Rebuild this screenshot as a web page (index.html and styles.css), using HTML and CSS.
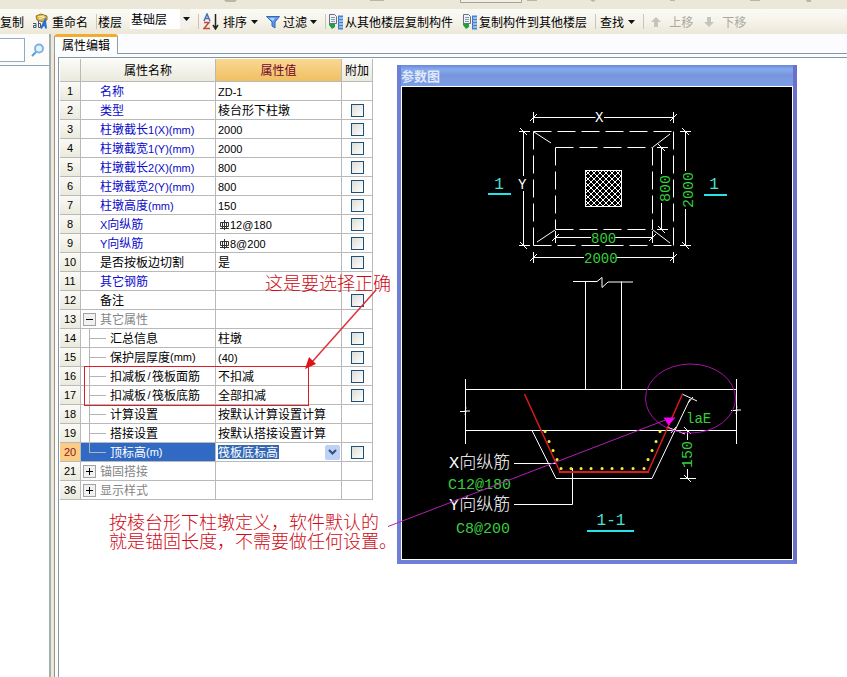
FILE: index.html
```html
<!DOCTYPE html>
<html lang="zh-CN">
<head>
<meta charset="utf-8">
<title>属性编辑</title>
<link rel="stylesheet" href="styles.css">
</head>
<body>
<svg width="0" height="0" class="defs" aria-hidden="true">
  <defs>
    <symbol id="caret" viewBox="0 0 7 4"><path d="M0 0h7L3.500 4z" fill="#111"/></symbol>
    <symbol id="copy" viewBox="0 0 16 17">
      <path d="M2.500 1.500h5l2 2v7h-7z" fill="#eef3fa" stroke="#65717f"/>
      <path d="M4 4.500h4M4 6.500h4M4 8.500h4" stroke="#8897a8"/>
      <path d="M2 10v2l3 4 3-2v-3H5z" fill="#1fa03c"/>
      <path d="M11.500 3v13" stroke="#3b5f9c"/>
      <path d="M11 3.500h5M11 6.500h5M11 9.500h5M11 12.500h5M11 15.500h5" stroke="#3f86dc" stroke-width="2"/>
    </symbol>
    <symbol id="rebar" viewBox="0 0 12 12"><path d="M6.500 1v10M2.500 3.500h8v4h-8zM4.500 3.500v6M8.500 3.500v6M2 9.500h9" fill="none" stroke="#333"/></symbol>
    <symbol id="up" viewBox="0 0 10 10"><path d="M5 0l5 5H7v5H3V5H0z" fill="#c5c5bf"/></symbol>
  </defs>
</svg>

<div class="strip">
  <svg width="847" height="9" aria-hidden="true">
    <path d="M224 0h13l-2 2h-9zM370 0h14v1h-14zM527 0h10v1h-10zM590 0h6l-3 2zM670 0h5v1h-5zM750 0h10v1h-10zM806 0h5v2h-4z" fill="#b9b7aa"/>
    <path d="M460.500 0v2.500h61V0" fill="#f1efe3" stroke="#a3a295"/>
  </svg>
</div>

<div class="toolbar">
  <button type="button">复制</button>
  <button type="button" class="roomy">
    <svg width="16" height="17" viewBox="0 0 16 17" aria-hidden="true">
      <path d="M4 3l5-2 6 2v4l-4 2-6-2z" fill="#d8b44c" stroke="#8d7533"/>
      <path d="M6 4l6-1M7 6l6-2" stroke="#fff3b0"/>
      <path d="M1 10.500h3v4H1.500v-2H4M6.500 8v6.500h2v-4h-2" fill="none" stroke="#47566e"/>
      <path d="M9 15.500l4-8 1 8M11 12.500h3" fill="none" stroke="#2c6fce" stroke-width="2"/>
    </svg>
    重命名
  </button>
  <span class="sep tight"></span>
  <label for="floor">楼层</label>
  <span class="combo">
    <select id="floor"><option>基础层</option></select>
    <svg width="7" height="4" aria-hidden="true"><use href="#caret"/></svg>
  </span>
  <span class="sep"></span>
  <button type="button" class="roomy">
    <svg width="16" height="17" viewBox="0 0 16 17" aria-hidden="true">
      <path d="M1 8l3-7 3 7M2 5.500h4" fill="none" stroke="#4a6fb5" stroke-width="1.500"/>
      <path d="M1 9.500h5l-5 6h6" fill="none" stroke="#c04a3c" stroke-width="1.500"/>
      <path d="M12.500 1v14M10 12l2.500 4 2.500-4" fill="none" stroke="#222" stroke-width="1.500"/>
    </svg>
    排序
    <svg width="7" height="4" aria-hidden="true"><use href="#caret"/></svg>
  </button>
  <button type="button">
    <svg width="14" height="14" viewBox="0 0 14 14" aria-hidden="true">
      <path d="M.5 1.500h13L9 7v6l-3-2V7z" fill="#5f97e8" stroke="#3567b8"/>
      <path d="M3 3h6L7 6z" fill="#b8d4fa"/>
    </svg>
    过滤
    <svg width="7" height="4" aria-hidden="true"><use href="#caret"/></svg>
  </button>
  <span class="sep tight"></span>
  <button type="button" class="snug"><svg width="16" height="17" aria-hidden="true"><use href="#copy"/></svg>从其他楼层复制构件</button>
  <button type="button" class="snug"><svg width="16" height="17" aria-hidden="true"><use href="#copy"/></svg>复制构件到其他楼层</button>
  <span class="sep"></span>
  <button type="button" class="roomy">查找 <svg width="7" height="4" aria-hidden="true"><use href="#caret"/></svg></button>
  <span class="sep"></span>
  <button type="button" class="move" disabled><svg width="10" height="10" aria-hidden="true"><use href="#up"/></svg>上移</button>
  <button type="button" class="move" disabled><svg class="down" width="10" height="10" aria-hidden="true"><use href="#up"/></svg>下移</button>
</div>

<div class="main">
  <aside class="side">
    <div class="search">
      <input type="text" aria-label="搜索">
      <button type="button" aria-label="查找构件">
        <svg width="14" height="14" viewBox="0 0 14 14" aria-hidden="true">
          <circle cx="8" cy="5.500" r="4" fill="#e4f2fd" stroke="#7db4e6" stroke-width="2"/>
          <path d="M5 9l-4 4" stroke="#5b9bd8" stroke-width="2"/>
        </svg>
      </button>
    </div>
    <div class="list"></div>
  </aside>
  <div class="splitter"></div>

  <section class="editor">
    <div class="tabs"><button type="button" class="tab">属性编辑</button><span class="rest"></span></div>
    <div class="frame">
      <div class="sheet">
        <table>
          <colgroup><col class="c-no"><col class="c-name"><col class="c-value"><col class="c-add"></colgroup>
          <thead><tr><th></th><th>属性名称</th><th class="hot">属性值</th><th>附加</th></tr></thead>
          <tbody>
            <tr><th>1</th><td><div class="name key">名称</div></td><td><b>ZD-1</b></td><td></td></tr>
            <tr><th>2</th><td><div class="name key">类型</div></td><td>棱台形下柱墩</td><td><input type="checkbox" aria-label="附加 2"></td></tr>
            <tr><th>3</th><td><div class="name key">柱墩截长<b>1(X)(mm)</b></div></td><td><b>2000</b></td><td><input type="checkbox" aria-label="附加 3"></td></tr>
            <tr><th>4</th><td><div class="name key">柱墩截宽<b>1(Y)(mm)</b></div></td><td><b>2000</b></td><td><input type="checkbox" aria-label="附加 4"></td></tr>
            <tr><th>5</th><td><div class="name key">柱墩截长<b>2(X)(mm)</b></div></td><td><b>800</b></td><td><input type="checkbox" aria-label="附加 5"></td></tr>
            <tr><th>6</th><td><div class="name key">柱墩截宽<b>2(Y)(mm)</b></div></td><td><b>800</b></td><td><input type="checkbox" aria-label="附加 6"></td></tr>
            <tr><th>7</th><td><div class="name key">柱墩高度<b>(mm)</b></div></td><td><b>150</b></td><td><input type="checkbox" aria-label="附加 7"></td></tr>
            <tr><th>8</th><td><div class="name key"><b>X</b>向纵筋</div></td><td><svg class="bar" width="12" height="12" aria-hidden="true"><use href="#rebar"/></svg><b>12@180</b></td><td><input type="checkbox" aria-label="附加 8"></td></tr>
            <tr><th>9</th><td><div class="name key"><b>Y</b>向纵筋</div></td><td><svg class="bar" width="12" height="12" aria-hidden="true"><use href="#rebar"/></svg><b>8@200</b></td><td><input type="checkbox" aria-label="附加 9"></td></tr>
            <tr><th>10</th><td><div class="name">是否按板边切割</div></td><td>是</td><td><input type="checkbox" aria-label="附加 10"></td></tr>
            <tr><th>11</th><td><div class="name key">其它钢筋</div></td><td></td><td></td></tr>
            <tr><th>12</th><td><div class="name">备注</div></td><td></td><td><input type="checkbox" aria-label="附加 12"></td></tr>
            <tr><th>13</th><td><div class="group"><button type="button" class="toggle open" aria-label="收起"></button>其它属性</div></td><td></td><td></td></tr>
            <tr><th>14</th><td><div class="child">汇总信息</div></td><td>柱墩</td><td><input type="checkbox" aria-label="附加 14"></td></tr>
            <tr><th>15</th><td><div class="child">保护层厚度<b>(mm)</b></div></td><td><b>(40)</b></td><td><input type="checkbox" aria-label="附加 15"></td></tr>
            <tr><th>16</th><td><div class="child">扣减板<b class="slash">/</b>筏板面筋</div></td><td>不扣减</td><td><input type="checkbox" aria-label="附加 16"></td></tr>
            <tr><th>17</th><td><div class="child">扣减板<b class="slash">/</b>筏板底筋</div></td><td>全部扣减</td><td><input type="checkbox" aria-label="附加 17"></td></tr>
            <tr><th>18</th><td><div class="child">计算设置</div></td><td>按默认计算设置计算</td><td></td></tr>
            <tr><th>19</th><td><div class="child">搭接设置</div></td><td>按默认搭接设置计算</td><td></td></tr>
            <tr class="current"><th>20</th><td><div class="child last">顶标高<b>(m)</b></div></td><td><div class="edit"><input type="text" value="筏板底标高" aria-label="顶标高"><button type="button" aria-label="展开"><svg width="9" height="7" viewBox="0 0 9 7" aria-hidden="true"><path d="M1 1l3.500 3.500L8 1" fill="none" stroke="#33507f" stroke-width="2"/></svg></button></div></td><td><input type="checkbox" aria-label="附加 20"></td></tr>
            <tr><th>21</th><td><div class="group"><button type="button" class="toggle" aria-label="展开"></button>锚固搭接</div></td><td></td><td></td></tr>
            <tr><th>36</th><td><div class="group"><button type="button" class="toggle" aria-label="展开"></button>显示样式</div></td><td></td><td></td></tr>
          </tbody>
        </table>
      </div>
    </div>
  </section>
</div>

<section class="window">
  <h2>参数图</h2>
  <svg class="drawing" viewBox="402 87 390 472" role="img" aria-label="柱墩参数图">
    <defs>
      <pattern id="hatch" x="585" y="170" width="6" height="6" patternUnits="userSpaceOnUse"><path d="M0 0l6 6M6 0L0 6" stroke="#fff"/></pattern>
    </defs>
    <g fill="none" stroke="#fff">
      <!-- plan view -->
      <path d="M533.500 131.500h140M533.500 245.500h140M555.500 147.500h97M555.500 229.500h97" stroke-dasharray="18 6"/>
      <path d="M533.500 131.500v114M673.500 131.500v114M555.500 147.500v82M652.500 147.500v82" stroke-dasharray="18 6"/>
      <path d="M534 132l17 11M555 230l-18 12M670 134l-17 13M653 230l17 13"/>
      <rect x="585.500" y="170.500" width="36" height="36" fill="url(#hatch)"/>
      <path d="M533.500 117.500h62M604 117.500h69.500M533.500 112v11M673.500 112v11M530 121l7-7M670 121l7-7"/>
      <path d="M523.500 131.500V176M523.500 191v54.500M519 131.500h11M519 245.500h11M520 128l7 7M520 242l7 7"/>
      <path d="M555.500 237.500H591M615 237.500h37.500M555.500 231v12M652.500 231v12M552 241l7-7M649 241l7-7"/>
      <path d="M533.500 257.500H584M616 257.500h57.500M533.500 252v11M673.500 252v11M530 261l7-7M670 261l7-7"/>
      <path d="M661.500 147.500V174M661.500 203v26.500M657 147.500h11M657 229.500h11M658 144l7 7M658 226l7 7"/>
      <path d="M685.500 131.500V171M685.500 209v36.500M680 131.500h11M680 245.500h11M682 128l7 7M682 242l7 7"/>
      <!-- section view -->
      <path d="M573 281.500h24l5-4v10l6-5.500h25M585.500 281.500v108M621.500 281.500v108"/>
      <path d="M465.500 389.500h271M465.500 430.500h271"/>
      <path d="M465.500 379v65M460 411.500h5l1-4M465 415l1-4h4M736.500 379v65M731 410.500h5l1-4M736 414l1-4h4"/>
      <path d="M532 430.500l24 48h96L690 399M682 394l15 7M667 427l18 7M688 403l5-6M671 433l5-6"/>
      <path d="M687.500 430v10M687.500 469v9.500M680 478.500h16M684 427l7 7M684 475l7 7"/>
      <path d="M514 463.500h42M514 504.500h58.500V468"/>
    </g>
    <g fill="none" stroke="#e01818">
      <path d="M524.500 394L560 472M648 472l34.500-78" stroke-width="1.500"/>
      <path d="M559 472h90" stroke-width="2"/>
    </g>
    <path class="dots" d="M561 468.500h.1M571 468.500h.1M581 468.500h.1M591 468.500h.1M602 468.500h.1M612 468.500h.1M622 468.500h.1M633 468.500h.1M644 468.500h.1M545 431.500h.1M549 441.500h.1M553 450.500h.1M557 459.500h.1M660 431.500h.1M656 441.500h.1M652 450.500h.1M648 459.500h.1"/>
    <path d="M488 194h23M704 195h23M587 531h47" stroke="#22e4ea" stroke-width="2"/>
    <g class="cyan" text-anchor="middle"><text x="499" y="189">1</text><text x="714" y="189">1</text><text x="611" y="525">1-1</text></g>
    <g class="white"><text class="small" x="595" y="122">X</text><text class="small" x="518" y="189">Y</text><text x="449" y="468">X向纵筋</text><text x="449" y="510">Y向纵筋</text></g>
    <g class="green">
      <text class="small" x="591" y="243">800</text><text class="small" x="584" y="263">2000</text>
      <text transform="translate(670 202) rotate(-90)">800</text>
      <text transform="translate(693 208) rotate(-90)">2000</text>
      <text transform="translate(692 468) rotate(-90)">150</text>
      <text class="small" x="686" y="423">laE</text>
      <text x="448" y="489">C12@180</text><text x="456" y="533">C8@200</text>
    </g>
    <ellipse cx="690.500" cy="398.500" rx="45" ry="34.500" fill="none" stroke="#a512a5"/>
  </svg>
</section>

<svg class="marks" aria-hidden="true">
  <rect x="84.500" y="366.500" width="224" height="39" fill="none" stroke="#dc1c28"/>
  <path d="M376 290l-64 72" stroke="#e0303a" stroke-width="1.500"/>
  <path d="M305 369l4-12 7 7z" fill="#e01414"/>
  <path d="M388 526.500L668 419" stroke="#b41eb4" fill="none"/>
  <path d="M663.500 417.500h12l-7 8z" fill="#f000f0"/>
</svg>
<p class="note note-top">这是要选择正确</p>
<p class="note note-bottom">按棱台形下柱墩定义，软件默认的<br>就是锚固长度，不需要做任何设置。</p>
</body>
</html>
```

FILE: styles.css
```css
* { box-sizing: border-box; }

body {
  margin: 0;
  min-height: 100vh;
  display: flex;
  flex-direction: column;
  position: relative;
  overflow: hidden;
  background: #fff;
  color: #000;
  font: 12px/16px "Noto Sans CJK SC", sans-serif;
}

button, input, select {
  font: inherit;
  color: inherit;
  border: 0;
  margin: 0;
  padding: 0;
  background: none;
  border-radius: 0;
  appearance: none;
}

svg { flex: none; }
.defs { position: absolute; }

b {
  font: 11px/16px "Liberation Sans", sans-serif;
}

/* toolbars */
.strip { height: 9px; background: #ebe8d9; overflow: hidden; }
.strip svg { display: block; }

.toolbar {
  height: 25px;
  display: flex;
  align-items: center;
  gap: 8px;
  background: linear-gradient(#fbfaf6, #f5f3ea 50%, #ebe8d8);
  white-space: nowrap;
}
.toolbar button { display: flex; align-items: center; gap: 3px; flex: none; }
.toolbar .roomy { gap: 4px; }
.toolbar .snug { gap: 2px; }
.toolbar .move { gap: 8px; padding-left: 3px; color: #aaa99e; }
.down { transform: rotate(180deg); }
.sep { width: 1px; height: 15px; margin-right: -4px; background: #c9c7b8; flex: none; }
.sep.tight { margin-right: -7px; }

.combo {
  display: grid;
  align-self: flex-start;
  align-items: center;
  width: 60px;
  background: linear-gradient(90deg, #fff 50px, #f3f1ea 50px);
}
.combo > * { grid-area: 1 / 1; }
.combo select { height: 20px; padding-left: 1px; }
.combo svg { justify-self: end; pointer-events: none; }

/* body layout */
.main { flex: 1; display: flex; }
.side { width: 49px; display: flex; flex-direction: column; }
.search { display: flex; align-items: center; gap: 6px; height: 31px; background: #fcfcfa; }
.search input { width: 25px; height: 24px; border: 1px solid #8fabc4; border-left: 0; background: #fff; }
.search button { display: flex; }
.list { flex: 1; border-top: 1px solid #8ba4b4; }
.splitter { width: 5px; background: #efe6da; border-left: 2px solid #9fb0ae; }

.editor { flex: 1; display: flex; flex-direction: column; background: #fcfcfe; }
.tabs { display: flex; height: 20px; }
.tab {
  width: 64px;
  border: 1px solid #8ba0ae;
  border-top: 3px solid #f3ac30;
  border-bottom: 0;
  border-radius: 3px 3px 0 0;
  background: #fefefe;
}
.tabs .tab { line-height: 14px; padding-bottom: 2px; }
.rest { flex: 1; border-bottom: 1px solid #8099a6; }
.frame { flex: 1; display: flex; padding: 3px 0 0 3px; border-left: 1px solid #98927f; }
.sheet { flex: 1; padding: 1px; border: solid #7f98a8; border-width: 1px 0 0 1px; background: #fff; }

/* property table */
table { table-layout: fixed; width: 313px; border-spacing: 0; border-collapse: separate; }
.c-no { width: 21px; }
.c-name { width: 135px; }
.c-value { width: 126px; }
.c-add { width: 31px; }
th, td { padding: 0; border: solid #b9b9b9; border-width: 0 1px 1px 0; font-weight: 400; white-space: nowrap; }
thead th { height: 23px; background: linear-gradient(#fbfbf8, #ebeadd); }
thead .hot { background: linear-gradient(#fad891, #efbf63); color: #72052c; }
tbody th { height: 19px; background: linear-gradient(#fafaf6, #ebeadd); font: 11px/16px "Liberation Sans", sans-serif; text-align: center; }
td { height: 19px; line-height: 16px; }
td:nth-child(3) { padding-left: 2px; }
td:nth-child(4) { text-align: center; line-height: 0; }
td input[type="checkbox"] {
  width: 13px;
  height: 13px;
  border: 1px solid #1f5077;
  background: linear-gradient(135deg, #dcdcd7, #fff);
  vertical-align: middle;
}
.name { padding-left: 19px; }
.key { color: #0a0aca; }
.slash { width: 6px; text-align: center; }
.bar { vertical-align: -2px; }

.group, .child { display: flex; align-items: center; height: 18px; }
.group { color: #858585; gap: 4px; padding-left: 2px; }
.toggle {
  width: 13px;
  height: 13px;
  border: 1px solid #a2a2a2;
  background:
    linear-gradient(#000, #000) center / 7px 1px no-repeat,
    linear-gradient(#000, #000) center / 1px 7px no-repeat,
    #f1f1ef;
}
.toggle.open { background: linear-gradient(#000, #000) center / 7px 1px no-repeat, #f1f1ef; }
.child::before {
  content: "";
  width: 17px;
  height: 18px;
  margin: 0 4px 0 8px;
  background:
    linear-gradient(#b4b4b4, #b4b4b4) 0 0 / 1px 100% no-repeat,
    linear-gradient(#b4b4b4, #b4b4b4) 0 9px / 100% 1px no-repeat;
}
.child.last::before { background-size: 1px 10px, 100% 1px; }

.current th { background: #fccb86; color: #8b1a1a; }
.current td:nth-child(2) { background: #316ac5; color: #fff; }
.edit { display: flex; justify-content: space-between; align-items: center; height: 18px; padding-right: 1px; }
.edit input { width: 61px; height: 14px; background: #3468b4; color: #fff; }
.edit button { display: grid; place-items: center; width: 15px; height: 15px; border-radius: 2px; background: #bdd0f6; }

/* floating drawing window */
.window {
  position: absolute;
  left: 397px;
  top: 65px;
  width: 400px;
  border: solid #6f7fd6;
  border-width: 0 4px 4px;
  border-right-color: #6b70ca;
  background: #fff;
}
.window h2 {
  margin: 0;
  height: 21px;
  font-size: 13px;
  line-height: 22px;
  color: #dfe9fc;
  background: linear-gradient(#6787db, #86a9ec 20%, #7796de 50%, #7c9de4);
}
.drawing { display: block; width: 390px; margin: 1px 1px; background: #000; }
.drawing text { font: 15px "Liberation Mono", "Noto Sans CJK SC", monospace; }
.drawing .white text { font-size: 17px; font-weight: 300; fill: #fff; }
.drawing text.small, .drawing .white text.small { font-size: 14px; }
.green { fill: #35cf3c; }
.cyan { fill: #4ce0d8; }
.drawing .cyan text { font-size: 16px; }
.dots { stroke: #f4f032; stroke-width: 3; stroke-linecap: round; }

/* annotations over the page */
.marks { position: absolute; inset: 0; width: 100%; height: 100%; pointer-events: none; }
.note { position: absolute; margin: 0; color: #d00814; font-size: 18px; font-weight: 300; line-height: 19px; white-space: nowrap; }
.note-top { left: 265px; top: 273px; }
.note-bottom { left: 109px; top: 512px; }
```
